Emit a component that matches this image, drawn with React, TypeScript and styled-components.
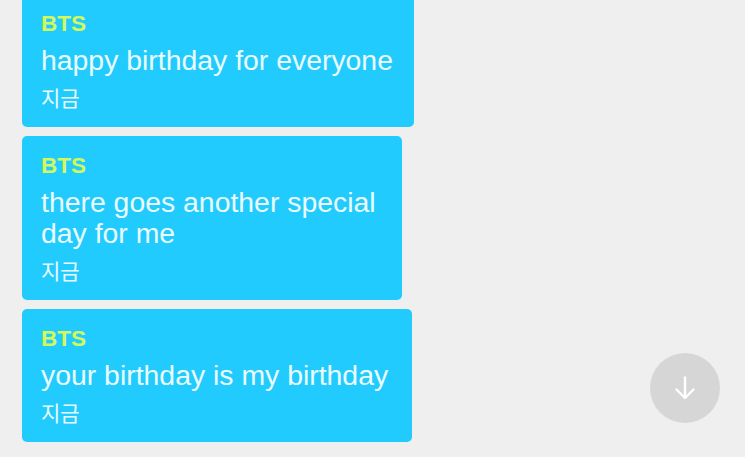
import React from "react";
import styled, { createGlobalStyle } from "styled-components";

const Global = createGlobalStyle`
  html, body {
    margin: 0;
    padding: 0;
    background: #efefef;
    overflow: hidden;
  }
  body {
    font-family: "Liberation Sans", Arial, "Noto Sans CJK KR", sans-serif;
  }
`;

const Screen = styled.div`
  position: relative;
  width: 745px;
  height: 457px;
  overflow: hidden;
  background: #efefef;
`;

/* the thread is scrolled a little, so the first bubble runs off the top */
const Thread = styled.div`
  display: flex;
  flex-direction: column;
  align-items: flex-start;
  gap: 9px;
  padding-left: 22px;
  margin-top: -6px;
`;

const Bubble = styled.div<{ $width?: number }>`
  box-sizing: border-box;
  width: ${(p) => (p.$width ? `${p.$width}px` : "fit-content")};
  background: #22cbfd;
  border-radius: 5px;
  padding: 17px 21px 18px 19px;
  display: flex;
  flex-direction: column;
`;

const Sender = styled.div`
  color: #d2f85c;
  font-weight: 700;
  font-size: 22.5px;
  line-height: 26px;
`;

const Body = styled.div`
  color: #eafbff;
  font-size: 28.4px;
  line-height: 31px;
  margin-top: 8px;
  white-space: nowrap;
`;

const Stamp = styled.div`
  color: #eafbff;
  font-family: "Noto Sans CJK KR", "Liberation Sans", sans-serif;
  font-size: 21px;
  line-height: 24px;
  margin-top: 9px;
`;

const ScrollDown = styled.button`
  position: absolute;
  left: 650px;
  top: 353px;
  width: 70px;
  height: 70px;
  border-radius: 50%;
  border: none;
  padding: 0;
  background: #d6d6d6;
  display: flex;
  align-items: center;
  justify-content: center;
`;

type Message = { sender: string; lines: string[]; time: string; width?: number };

const messages: Message[] = [
  { sender: "BTS", lines: ["happy birthday for everyone"], time: "지금" },
  { sender: "BTS", lines: ["there goes another special", "day for me"], time: "지금", width: 380 },
  { sender: "BTS", lines: ["your birthday is my birthday"], time: "지금", width: 390 },
];

export default function App() {
  return (
    <Screen>
      <Global />
      <Thread>
        {messages.map((m, i) => (
          <Bubble key={i} $width={m.width}>
            <Sender>{m.sender}</Sender>
            <Body>
              {m.lines.map((l, j) => (
                <div key={j}>{l}</div>
              ))}
            </Body>
            <Stamp>{m.time}</Stamp>
          </Bubble>
        ))}
      </Thread>
      <ScrollDown aria-label="scroll to bottom">
        <svg width="26" height="26" viewBox="0 0 26 26" fill="none" stroke="#ffffff" strokeWidth="2.4" strokeLinecap="round" strokeLinejoin="round">
          <path d="M13 2.5 V22.5" />
          <path d="M4.5 14.5 L13 23 L21.5 14.5" />
        </svg>
      </ScrollDown>
    </Screen>
  );
}
